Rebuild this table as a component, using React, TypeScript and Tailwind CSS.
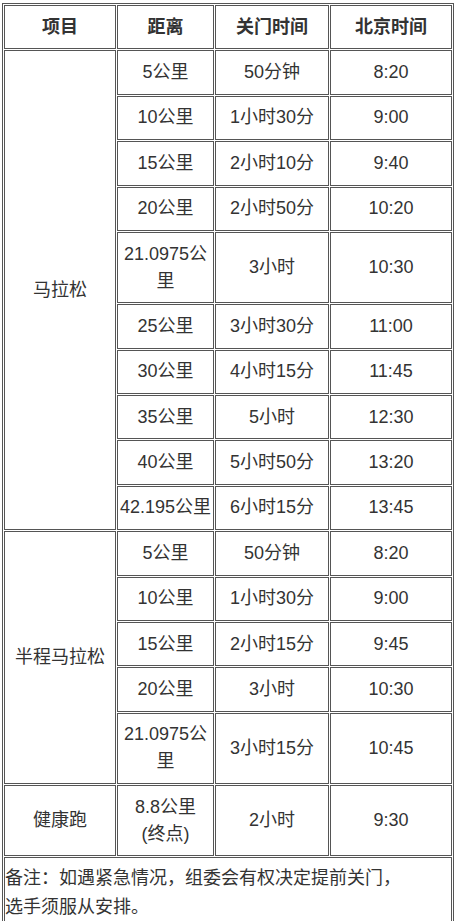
const marathon = [
  ["5公里", "50分钟", "8:20"],
  ["10公里", "1小时30分", "9:00"],
  ["15公里", "2小时10分", "9:40"],
  ["20公里", "2小时50分", "10:20"],
  ["21.0975公里", "3小时", "10:30"],
  ["25公里", "3小时30分", "11:00"],
  ["30公里", "4小时15分", "11:45"],
  ["35公里", "5小时", "12:30"],
  ["40公里", "5小时50分", "13:20"],
  ["42.195公里", "6小时15分", "13:45"],
];

const half = [
  ["5公里", "50分钟", "8:20"],
  ["10公里", "1小时30分", "9:00"],
  ["15公里", "2小时15分", "9:45"],
  ["20公里", "3小时", "10:30"],
  ["21.0975公里", "3小时15分", "10:45"],
];

const cell = "border border-[#555] px-[1px] pt-[7.7px] pb-[7.7px] text-center align-middle";

function Group({ name, rows }: { name: string; rows: string[][] }) {
  return (
    <>
      {rows.map((r, i) => (
        <tr key={i}>
          {i === 0 && (
            <td rowSpan={rows.length} className={cell}>
              {name}
            </td>
          )}
          {r.map((v, j) => (
            <td key={j} className={cell}>
              {v}
            </td>
          ))}
        </tr>
      ))}
    </>
  );
}

export default function App() {
  return (
    <div className="bg-white min-h-[921px] pt-[3px] pl-[2px] text-[#333] text-[18px] leading-[27px] font-['Liberation_Sans','Noto_Sans_CJK_SC',sans-serif]">
      <table className="table-fixed border-separate border-spacing-[1px] border border-[#555] w-[452px]">
        <colgroup>
          <col className="w-[112px]" />
          <col className="w-[97px]" />
          <col className="w-[114px]" />
          <col className="w-[122px]" />
        </colgroup>
        <thead>
          <tr className="font-bold text-[#333]">
            <th className={cell}>项目</th>
            <th className={cell}>距离</th>
            <th className={cell}>关门时间</th>
            <th className={cell}>北京时间</th>
          </tr>
        </thead>
        <tbody>
          <Group name="马拉松" rows={marathon} />
          <Group name="半程马拉松" rows={half} />
          <tr>
            <td className={cell}>健康跑</td>
            <td className={cell}>
              8.8公里
              <br />
              (终点)
            </td>
            <td className={cell}>2小时</td>
            <td className={cell}>9:30</td>
          </tr>
          <tr>
            <td colSpan={4} className="border border-[#555] pl-0 pr-1 pt-[6px] pb-[8px] text-left leading-[29px]">
              备注：如遇紧急情况，组委会有权决定提前关门，
              <br />
              选手须服从安排。
            </td>
          </tr>
        </tbody>
      </table>
    </div>
  );
}
